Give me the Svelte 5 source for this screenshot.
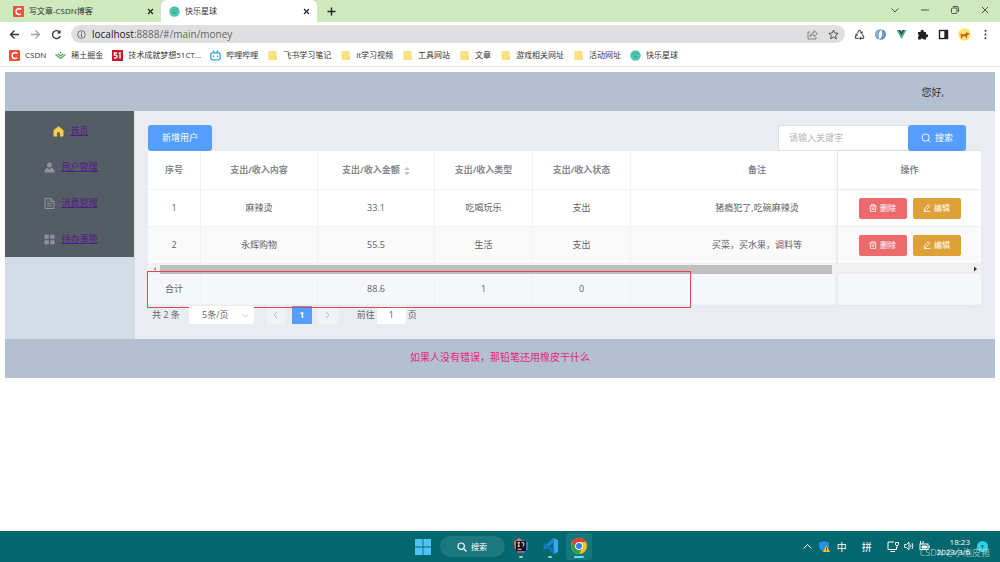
<script>
    let keyword = $state("");
    let current = $state("1");
    let pageSize = $state("5");

    const bookmarks = [
        { name: "CSDN", icon: "csdn" },
        { name: "稀土掘金", icon: "juejin" },
        { name: "技术成就梦想51CT...", icon: "cto" },
        { name: "哔哩哔哩", icon: "bili" },
        { name: "飞书学习笔记", icon: "folder" },
        { name: "it学习视频", icon: "folder" },
        { name: "工具网站", icon: "folder" },
        { name: "文章", icon: "folder" },
        { name: "游戏相关网址", icon: "folder" },
        { name: "活动网址", icon: "folder" },
        { name: "快乐星球", icon: "planet" },
    ];

    const menus = [
        { name: "首页", icon: "home" },
        { name: "用户管理", icon: "user" },
        { name: "消费管理", icon: "doc" },
        { name: "待办事项", icon: "grid" },
    ];

    const rows = [
        { id: 1, content: "麻辣烫", money: 33.1, type: "吃喝玩乐", status: "支出", remark: "猪瘾犯了,吃碗麻辣烫" },
        { id: 2, content: "永辉购物", money: 55.5, type: "生活", status: "支出", remark: "买菜，买水果，调料等" },
    ];

    const total = rows.reduce((sum, r) => sum + r.money, 0).toFixed(1);
</script>

{#snippet icon(name)}
    {#if name === "csdn"}
        <svg class="ico" viewBox="0 0 11 11"><rect width="11" height="11" rx="1" fill="#f0513a" /><path d="M8.3 3.4C6.5 2 3.1 2.5 3 5.6c0 3 3.2 3.5 5 2.3" fill="none" stroke="#fff" stroke-width="1.5" /></svg>
    {:else if name === "juejin"}
        <svg class="ico" viewBox="0 0 11 11" fill="none" stroke="#55a558" stroke-width="1.2"><path d="M.5 4.500l5 4 5-4M2.700 3.800l2.800 2.200 2.800-2.200" /><path d="M5.500 1.400l1.300 1.100-1.300 1-1.300-1z" fill="#55a558" stroke="none" /></svg>
    {:else if name === "cto"}
        <svg class="ico" viewBox="0 0 11 11"><rect width="11" height="11" fill="#c9182b" /><path d="M5 3H2.300v2.200h1.400c1.800 0 1.800 2.800 0 2.800H2M6.600 3.600L8 2.800v5.700" fill="none" stroke="#fff" stroke-width="1.3" /></svg>
    {:else if name === "bili"}
        <svg class="ico" viewBox="0 0 11 11" fill="none" stroke="#2ea4dc" stroke-width="1.3"><rect x=".8" y="2.8" width="9.4" height="7" rx="1.5" /><path d="M3 .6l1.500 2M8 .6l-1.500 2M3.500 5.500v1.500M7.500 5.500v1.500" /></svg>
    {:else if name === "folder"}
        <svg class="ico" viewBox="0 0 11 11"><path d="M2 1h7.500v9H2a.7.700 0 0 1-.7-.7V1.700A.7.700 0 0 1 2 1z" fill="#fbe180" /><path d="M8 6.500h1.500V10H8z" fill="#f5d35c" /></svg>
    {:else if name === "planet"}
        <svg class="ico" viewBox="0 0 11 11"><circle cx="5.5" cy="5.5" r="5.2" fill="#4fc5ae" /><path d="M3.500 3.800h1M6.500 3.200h1.200M3.800 6c1 1.500 2.800 1.300 3.500 0" fill="none" stroke="#25826f" stroke-width=".8" /></svg>
    {:else if name === "home"}
        <svg class="ico" viewBox="0 0 11 11"><path d="M5.500.5L.8 4.300v5.900h3V7.500a1.700 1.700 0 0 1 3.400 0v2.700h3V4.300z" fill="#ffd04b" stroke="#ffd04b" stroke-width=".5" stroke-linejoin="round" /></svg>
    {:else if name === "user"}
        <svg class="ico" viewBox="0 0 11 11" fill="#909399"><circle cx="5.5" cy="3" r="2.5" /><path d="M.5 10.500c0-3 1.500-4.500 3-4.800l2 1.800 2-1.800c1.500.3 3 1.800 3 4.800z" /></svg>
    {:else if name === "doc"}
        <svg class="ico" viewBox="0 0 11 11" fill="none" stroke="#909399"><path d="M1 .6h6L10 3.500v7H1zM6.800.6v3H10M3 3.500h2M3 5.700h5M3 8h5" /></svg>
    {:else if name === "grid"}
        <svg class="ico" viewBox="0 0 11 11" fill="#909399"><path d="M.5.800h4.300v4H.5zM6.200.800h4.300v4H6.200zM.5 6.200h4.300v4H.5zM6.200 6.200h4.300v4H6.200z" /></svg>
    {/if}
{/snippet}

<div class="screen">
    <header class="browser">
        <div class="tabs">
            <div class="tab first">
                {@render icon("csdn")}
                <span>写文章-CSDN博客</span>
                <button class="plain" aria-label="关闭"><svg width="7" height="7" viewBox="0 0 7 7"><path d="M1 1l5 5M6 1L1 6" stroke="#222" stroke-width="1.2" /></svg></button>
            </div>
            <div class="tab active">
                {@render icon("planet")}
                <span>快乐星球</span>
                <button class="plain" aria-label="关闭"><svg width="7" height="7" viewBox="0 0 7 7"><path d="M1 1l5 5M6 1L1 6" stroke="#222" stroke-width="1.2" /></svg></button>
            </div>
            <button class="plain new" aria-label="新标签页"><svg width="9" height="9" viewBox="0 0 9 9"><path d="M4.500.5v8M.5 4.500h8" stroke="#222" stroke-width="1.4" /></svg></button>
            <div class="window">
                <svg width="10" height="10" viewBox="0 0 10 10"><path d="M1.500 3.500L5 7l3.500-3.500" /></svg>
                <svg width="10" height="10" viewBox="0 0 10 10"><path d="M1 5h8" /></svg>
                <svg width="10" height="10" viewBox="0 0 10 10"><rect x="1.5" y="3" width="5.5" height="5.5" rx="1" /><path d="M3 1.500h4a1.500 1.500 0 0 1 1.500 1.500v4" /></svg>
                <svg width="10" height="10" viewBox="0 0 10 10"><path d="M2 2l6 6M8 2L2 8" /></svg>
            </div>
        </div>

        <div class="toolbar">
            <div class="nav">
                <svg width="11" height="11" viewBox="0 0 11 11" stroke="#333"><path d="M10 5.500H1.500M5.500 1.500l-4 4 4 4" /></svg>
                <svg width="11" height="11" viewBox="0 0 11 11" stroke="#a0a0a0"><path d="M1 5.500h8.500M5.500 1.500l4 4-4 4" /></svg>
                <svg width="11" height="11" viewBox="0 0 11 11" stroke="#333"><path d="M9.300 7A4 4 0 1 1 8.600 3" /><path d="M9.500.8v3.700H5.800z" fill="#333" stroke="none" /></svg>
            </div>
            <div class="address">
                <svg width="9" height="9" viewBox="0 0 9 9" fill="none" stroke="#555"><circle cx="4.5" cy="4.5" r="3.8" stroke-width=".8" /><path d="M4.500 4v2.700M4.500 2.300v1" /></svg>
                <span class="url"><b>localhost</b>:8888/#/main/money</span>
                <svg width="11" height="11" viewBox="0 0 11 11" fill="none" stroke="#777" stroke-width=".9"><path d="M3 3H1v7h8V8M3 7.500c.3-2.800 2-3.800 4-3.800V1.500l3.300 3.200L7 7.700V5.800C5.200 5.800 4 6.300 3 7.500z" /></svg>
                <svg width="11" height="11" viewBox="0 0 11 11" fill="none" stroke="#444" stroke-width=".9"><path d="M5.500 1l1.300 3 3.300.3-2.500 2.200.8 3.300-2.900-1.800-2.900 1.800.8-3.300L.9 4.300 4.200 4z" /></svg>
            </div>
            <div class="exts">
                <svg width="11" height="11" viewBox="0 0 11 11" fill="none" stroke="#555" stroke-width="1.2"><path d="M3.500 4l1.300-2.500h1.400L7.700 4M8.300 5.300L9.800 8l-.7 1.300H6M4.500 9.300H1.800L1.200 8l1.400-2.600M6.300 3.700l1.500.6.600-1.500M7 8L5.800 9.300 7 10.500M1.300 5.800L2.800 5l.8 1.400" /></svg>
                <svg width="11" height="11" viewBox="0 0 11 11" fill="none" stroke="#7ba3d0" stroke-width="1.6"><path d="M5 1C2 1 .8 3.500.8 5.500S2 9.500 3.500 9.500C2.300 7 3 3 5 1z" fill="#a9c4e2" /><path d="M6 10c3 0 4.200-2.500 4.200-4.500S9 1.500 7.500 1.500C8.700 4 8 8 6 10z" fill="#a9c4e2" stroke="#5f8cc4" /></svg>
                <svg width="11" height="11" viewBox="0 0 11 11"><path d="M.5 1h3l2 3.500L7.500 1h3l-5 9z" fill="#41b883" /><path d="M2.500 1h2l1 1.800L6.500 1h2l-3 5.500z" fill="#34495e" /></svg>
                <svg width="11" height="11" viewBox="0 0 11 11" fill="#222"><path d="M1 3h2.700a1.600 1.600 0 1 1 3 0H9v2.400a1.500 1.500 0 1 1 0 2.800v2.300H6.500a1.500 1.500 0 0 0-2.800 0H1V7.900a1.500 1.500 0 0 0 0-2.600z" /></svg>
                <svg width="11" height="11" viewBox="0 0 11 11"><rect x="1.5" y="1.5" width="8" height="8" fill="none" stroke="#222" stroke-width="1.4" /><path d="M6.300 1h3.500v9H6.300z" fill="#222" /></svg>
                <svg class="avatar" width="13" height="13" viewBox="0 0 14 14"><circle cx="7" cy="7" r="6.7" fill="#fbe56d" /><path d="M2 6l2 .6h4l1-2.400 1 1 2 .4-.6 1.600-1.600.6L9.500 11h-1l-.3-2H5.500L4 11H3l.3-3z" fill="#c65a24" /></svg>
                <svg width="11" height="11" viewBox="0 0 11 11" fill="#333"><circle cx="5.5" cy="1.8" r="1" /><circle cx="5.5" cy="5.5" r="1" /><circle cx="5.5" cy="9.2" r="1" /></svg>
            </div>
        </div>

        <nav class="bookmarks">
            {#each bookmarks as b}
                <a href="#/">{@render icon(b.icon)}{b.name}</a>
            {/each}
        </nav>
    </header>

    <div class="page">
        <div class="top">您好,</div>

        <div class="middle">
            <aside>
                <ul>
                    {#each menus as m}
                        <li>{@render icon(m.icon)}<a href="#/main">{m.name}</a></li>
                    {/each}
                </ul>
            </aside>

            <main>
                <div class="actions">
                    <button class="primary add">新增用户</button>
                    <div class="search">
                        <input type="text" aria-label="关键字" placeholder="请输入关键字" bind:value={keyword}>
                        <button class="primary">
                            <svg width="10" height="10" viewBox="0 0 10 10" fill="none" stroke="#fff" stroke-width=".9"><circle cx="4.6" cy="4.6" r="3.6" /><path d="M7.200 7.200L9.300 9.300" /></svg>
                            搜索
                        </button>
                    </div>
                </div>

                <div class="tablebox">
                    <table>
                        <colgroup>
                            <col class="c-id"><col class="c-wide"><col class="c-wide"><col class="c-mid"><col class="c-mid"><col><col class="c-op">
                        </colgroup>
                        <thead>
                            <tr>
                                <th>序号</th>
                                <th>支出/收入内容</th>
                                <th>支出/收入金额 <svg class="sort" width="6" height="10" viewBox="0 0 6 10" fill="#c0c4cc"><path d="M3 1l3 3H0zM3 9L0 6h6z" /></svg></th>
                                <th>支出/收入类型</th>
                                <th>支出/收入状态</th>
                                <th class="remark">备注</th>
                                <th class="fixed">操作</th>
                            </tr>
                        </thead>
                        <tbody>
                            {#each rows as row}
                                <tr>
                                    <td>{row.id}</td>
                                    <td>{row.content}</td>
                                    <td>{row.money}</td>
                                    <td>{row.type}</td>
                                    <td>{row.status}</td>
                                    <td class="remark">{row.remark}</td>
                                    <td class="fixed">
                                        <div class="ops">
                                            <button class="danger">
                                                <svg width="8" height="8" viewBox="0 0 8 8" fill="none" stroke="#fff" stroke-width=".8"><path d="M.5 2h7M2.500 2V.7h3V2M1.300 2v5.400h5.400V2M3.200 3.500V6M4.800 3.500V6" /></svg>
                                                删除
                                            </button>
                                            <button class="warning">
                                                <svg width="8" height="8" viewBox="0 0 8 8" fill="none" stroke="#fff" stroke-width=".8"><path d="M5.300.8l1.500 1.500L3 6.200l-1.800.3.300-1.800zM.7 7.500h6.600" /></svg>
                                                编辑
                                            </button>
                                        </div>
                                    </td>
                                </tr>
                            {/each}
                        </tbody>
                        <tfoot>
                            <tr class="scroll">
                                <td colspan="7">
                                    <div class="bar">
                                        <svg width="5" height="6" viewBox="0 0 5 6"><path d="M4 1v4L1.500 3z" fill="#999" /></svg>
                                        <div class="track"><div class="thumb"></div></div>
                                        <svg width="5" height="6" viewBox="0 0 5 6"><path d="M1 .5v5L4 3z" fill="#333" /></svg>
                                    </div>
                                </td>
                            </tr>
                            <tr class="sum">
                                <td>合计</td>
                                <td></td>
                                <td>{total}</td>
                                <td>1</td>
                                <td>0</td>
                                <td></td>
                                <td class="fixed"></td>
                            </tr>
                        </tfoot>
                    </table>
                    <div class="mark"></div>
                </div>

                <div class="pagination">
                    <span>共 {rows.length} 条</span>
                    <div class="size">
                        <select aria-label="每页条数" bind:value={pageSize}>
                            <option value="5">5条/页</option>
                            <option value="10">10条/页</option>
                        </select>
                        <svg width="7" height="5" viewBox="0 0 7 5"><path d="M.5 1l3 3 3-3" fill="none" stroke="#c0c4cc" /></svg>
                    </div>
                    <div class="pager">
                        <button aria-label="上一页"><svg width="5" height="8" viewBox="0 0 5 8"><path d="M4 1L1 4l3 3" fill="none" stroke="#b4b8c0" /></svg></button>
                        <button class="on">1</button>
                        <button aria-label="下一页"><svg width="5" height="8" viewBox="0 0 5 8"><path d="M1 1l3 3-3 3" fill="none" stroke="#b4b8c0" /></svg></button>
                    </div>
                    <label>前往 <input type="text" bind:value={current}> 页</label>
                </div>
            </main>
        </div>

        <footer>如果人没有错误，那铅笔还用橡皮干什么</footer>
    </div>

    <div class="taskbar">
        <div class="apps">
            <svg width="16" height="16" viewBox="0 0 16 16" fill="#4cc2f5"><path d="M0 0h7.600v7.600H0zM8.400 0H16v7.600H8.400zM0 8.400h7.600V16H0zM8.400 8.400H16V16H8.400z" /></svg>
            <button class="find">
                <svg width="10" height="10" viewBox="0 0 10 10" fill="none" stroke="#fff" stroke-width="1.2"><circle cx="4.2" cy="4.2" r="3.2" /><path d="M6.600 6.600L9.500 9.500" /></svg>
                搜索
            </button>
            <div class="app">
                <svg width="16" height="16" viewBox="0 0 16 16"><path d="M1 4l5-4 4 3-3 6-5 2z" fill="#f97a3c" /><path d="M8 1l7 3v7l-5 5-4-4z" fill="#2f7de1" /><path d="M1 9l5-3 5 8-6 1z" fill="#e8457c" /><rect x="3" y="3" width="10" height="10" fill="#111" /><path d="M4.500 4.700h2.500M5.750 4.700v3.500M4.500 8.200H7M8.500 4.700h2.300v2.700q0 1-1.200.8M4.500 11.300h4" fill="none" stroke="#fff" stroke-width=".9" /></svg>
                <i></i>
            </div>
            <div class="app">
                <svg width="16" height="16" viewBox="0 0 16 16"><path d="M11.500 0v16L16 14V2z" fill="#3ba5ee" /><path d="M11.500 0L1 9.500l1.800 1.700L12.500 4z" fill="#1f86d6" /><path d="M11.500 16L1 6.500l1.800-1.700L12.500 12z" fill="#1274bf" /></svg>
                <i></i>
            </div>
            <div class="app current">
                <svg width="16" height="16" viewBox="0 0 16 16"><circle cx="8" cy="8" r="8" fill="#fbc116" /><path d="M1.100 4A8 8 0 0 1 14.900 4H8L4.500 10z" fill="#e33b2e" /><path d="M1.100 4A8 8 0 0 0 8 16l3.500-6L8 12 4.500 10z" fill="#2ba24c" /><circle cx="8" cy="8" r="3.9" fill="#fff" /><circle cx="8" cy="8" r="3" fill="#3b7de8" /></svg>
                <i></i>
            </div>
        </div>

        <div class="tray">
            <svg width="9" height="9" viewBox="0 0 9 9" fill="none" stroke="#fff"><path d="M.7 6.500l3.800-4 3.800 4" /></svg>
            <svg width="11" height="11" viewBox="0 0 11 11"><path d="M5 0l5 1.500V5c0 3-2.500 5-5 6-2.500-1-5-3-5-6V1.500z" fill="#2d8de0" /><path d="M7.500 4.500L11 11H4z" fill="#fbc02d" /><path d="M7.500 6.500v2M7.500 9.200v.9" stroke="#222" stroke-width=".8" /></svg>
            <span class="ime">中</span>
            <span class="ime">拼</span>
            <div class="sys">
                <svg width="12" height="11" viewBox="0 0 12 11" fill="none" stroke="#fff"><path d="M7 1H1v7.500h8.500V6M3.500 10.500H8M8.500 1.500h3v2.300l-1.500 1-1.500-1zM10 5v2" /></svg>
                <svg width="10" height="10" viewBox="0 0 10 10" fill="none" stroke="#fff" stroke-width=".9"><path d="M.6 3.500h1.800L5 1.200v7.600L2.400 6.500H.6zM6.500 3.500q1 1.500 0 3M8 2q2 3 0 6" /></svg>
                <svg width="11" height="10" viewBox="0 0 11 10" fill="none" stroke="#fff"><rect x="1" y="3" width="8" height="5.5" /><path d="M10.300 4.500v2.500M3 5h4.500v2H3z" fill="#fff" /><path d="M1.500 0v3M4 0v3" /></svg>
            </div>
            <div class="clock">
                <span>18:23</span>
                <span>2023/3/6</span>
            </div>
            <span class="badge">1</span>
            <span class="watermark">CSDN @小泡皮猪</span>
        </div>
    </div>
</div>

<style>
    :global(body) {
        margin: 0;
        background: #fff;
    }

    .screen {
        min-height: 100vh;
        display: flex;
        flex-direction: column;
        font-family: "Open Sans", "Noto Sans CJK SC", sans-serif;
        font-size: 9px;
        line-height: 12px;
        color: #606266;
    }

    .screen * {
        box-sizing: border-box;
    }

    svg {
        flex: none;
        display: block;
    }

    button,
    input,
    select {
        font: inherit;
        margin: 0;
        padding: 0;
        border: 0;
    }

    .ico {
        width: 11px;
        height: 11px;
    }

    .plain {
        background: none;
    }

    /* browser */
    .browser {
        border-bottom: 1px solid #e3e5e8;
        color: #333;
        font-size: 8px;
    }

    .tabs {
        display: flex;
        height: 22px;
        background: #cde9bd;
    }

    .tab {
        display: flex;
        align-items: center;
        gap: 5px;
        padding: 0 7px 0 8px;
        width: 156px;
    }

    .tab.first {
        width: 161px;
        padding-left: 13px;
    }

    .tab span {
        flex: 1;
        white-space: nowrap;
    }

    .tab.active {
        background: #fff;
        border-radius: 6px 6px 0 0;
    }

    .new {
        margin-left: 10px;
    }

    .window {
        display: flex;
        align-items: center;
        gap: 20px;
        margin-left: auto;
        padding: 0 10px 2px 0;
        fill: none;
        stroke: #444;
        stroke-width: 0.9;
    }

    .toolbar {
        display: flex;
        align-items: center;
        height: 24px;
        padding: 0 9px;
    }

    .nav {
        display: flex;
        gap: 10px;
        width: 62px;
        fill: none;
        stroke-width: 1.3;
    }

    .address {
        flex: 1;
        display: flex;
        align-items: center;
        gap: 6px;
        height: 18px;
        padding: 0 6px;
        border-radius: 9px;
        background: #dfdfe2;
    }

    .address svg:last-child {
        margin-left: 4px;
    }

    .url {
        flex: 1;
        font-size: 10px;
        color: #666;
    }

    .url b {
        font-weight: normal;
        color: #222;
    }

    .exts {
        display: flex;
        align-items: center;
        gap: 10px;
        padding-left: 9px;
    }

    .avatar {
        margin: 0 -1px;
    }

    .bookmarks {
        display: flex;
        align-items: center;
        gap: 9px;
        height: 20px;
        padding: 0 9px 2px;
    }

    .bookmarks a {
        display: flex;
        align-items: center;
        gap: 5px;
        color: #333;
        text-decoration: none;
        white-space: nowrap;
    }

    /* page */
    .page {
        flex: 1;
        padding: 5px;
    }

    .top {
        height: 39px;
        padding-right: 51px;
        line-height: 40px;
        font-size: 10px;
        text-align: right;
        color: #333;
        background: #b3c0d1;
    }

    .middle {
        display: flex;
    }

    aside {
        width: 130px;
        background: #d3dce6;
    }

    ul {
        margin: 0;
        padding: 2px 0 0;
        list-style: none;
        background: #545c64;
        border-right: 1px solid #e6e6e6;
    }

    li {
        display: flex;
        align-items: center;
        justify-content: center;
        gap: 6px;
        height: 36px;
        padding-left: 3px;
    }

    li a {
        color: #551a8b;
    }

    main {
        flex: 1;
        padding: 14px 14px 15px 13px;
        background: #e9edf2;
    }

    .actions {
        display: flex;
        justify-content: space-between;
        padding-right: 15px;
    }

    .primary {
        display: flex;
        align-items: center;
        justify-content: center;
        gap: 4px;
        height: 26px;
        width: 58px;
        color: #fff;
        background: #559dff;
        border-radius: 3px;
    }

    .add {
        width: 64px;
    }

    .search {
        display: flex;
    }

    .search input {
        width: 130px;
        padding: 0 10px;
        background: #fff;
        border: 1px solid #dcdfe6;
        border-right: 0;
        border-radius: 3px 0 0 3px;
    }

    .search input::placeholder {
        color: #b4b8c0;
    }

    .tablebox {
        position: relative;
    }

    table {
        width: 100%;
        table-layout: fixed;
        border-collapse: separate;
        border-spacing: 0;
        background: #fff;
        text-align: center;
    }

    .c-id {
        width: 53px;
    }

    .c-wide {
        width: 117px;
    }

    .c-mid {
        width: 98px;
    }

    .c-op {
        width: 143px;
    }

    th,
    td {
        padding: 0;
        border-right: 1px solid #f0f2f6;
        border-bottom: 1px solid #f0f2f6;
    }

    th {
        height: 39px;
        color: #85888e;
    }

    td {
        height: 37px;
    }

    .sort {
        display: inline-block;
        margin-left: 2px;
        vertical-align: middle;
    }

    .remark {
        padding-left: 46px;
    }

    .fixed {
        border-right: 0;
        box-shadow: -2px 0 4px rgba(0, 0, 0, 0.06);
    }

    tbody tr:nth-child(2) td {
        background: #fafafa;
    }

    .ops {
        display: flex;
        justify-content: center;
        gap: 6px;
    }

    .ops button {
        display: flex;
        align-items: center;
        justify-content: center;
        gap: 3px;
        width: 48px;
        height: 21px;
        font-size: 8px;
        color: #fff;
        border-radius: 2px;
    }

    .ops .danger {
        background: #ed6a6c;
    }

    .ops .warning {
        background: #dfa137;
    }

    .scroll td {
        height: 10px;
        border: 0;
    }

    .bar {
        display: flex;
        align-items: center;
        gap: 3px;
        height: 10px;
        padding: 0 3px 0 4px;
        background: #f1f1f1;
    }

    .track {
        flex: 1;
        height: 9px;
    }

    .thumb {
        width: 83%;
        height: 9px;
        background: #bfbfbf;
    }

    .sum td {
        height: 31px;
        background: #f5f7fa;
    }

    /* frame around the summary row */
    .mark {
        position: absolute;
        left: -1px;
        bottom: -3px;
        width: 544px;
        height: 37px;
        border: 1px solid #e2474f;
    }

    .pagination {
        display: flex;
        align-items: center;
        height: 19px;
        padding-left: 4px;
    }

    .size {
        position: relative;
        margin: 0 12px 0 9px;
    }

    .size select {
        appearance: none;
        display: block;
        width: 65px;
        height: 18px;
        padding-right: 12px;
        text-align: center;
        text-align-last: center;
        color: #606266;
        background: #fff;
        border-radius: 2px;
    }

    .size svg {
        position: absolute;
        right: 5px;
        top: 7px;
    }

    .pager {
        display: flex;
        gap: 6px;
        margin-right: 19px;
    }

    .pager button {
        display: flex;
        align-items: center;
        justify-content: center;
        width: 20px;
        height: 18px;
        background: #f0f2f5;
        border-radius: 1px;
    }

    .pager .on {
        color: #fff;
        font-weight: bold;
        background: #559dff;
    }

    .pagination label {
        display: flex;
        align-items: center;
        gap: 2px;
    }

    .pagination input {
        width: 29px;
        height: 18px;
        text-align: center;
        color: #606266;
        background: #fff;
        border-radius: 2px;
    }

    footer {
        height: 39px;
        line-height: 36px;
        font-size: 10px;
        text-align: center;
        color: #e91e86;
        background: #b3c0d1;
    }

    /* taskbar */
    .taskbar {
        position: relative;
        display: flex;
        justify-content: center;
        height: 31px;
        background: #03676e;
        color: #fff;
    }

    .apps {
        display: flex;
        align-items: center;
        gap: 3px;
        padding-left: 6px;
    }

    .find {
        display: flex;
        align-items: center;
        justify-content: center;
        gap: 4px;
        width: 65px;
        height: 21px;
        margin-left: 6px;
        font-size: 8px;
        color: #fff;
        background: #1c777e;
        border-radius: 11px;
    }

    .app {
        display: flex;
        flex-direction: column;
        align-items: center;
        justify-content: center;
        gap: 2px;
        width: 26px;
        height: 27px;
        padding-top: 3px;
    }

    .app.current {
        background: #17777d;
        border-radius: 3px;
    }

    .app i {
        width: 4px;
        height: 2px;
        border-radius: 1px;
        background: #a9c6c8;
    }

    .app.current i {
        width: 10px;
        background: #5fe0ec;
    }

    .tray {
        position: absolute;
        right: 12px;
        top: 0;
        height: 31px;
        display: flex;
        align-items: center;
        gap: 7px;
    }

    .ime {
        font-size: 10px;
        margin-right: 8px;
    }

    .sys {
        display: flex;
        gap: 5px;
    }

    .clock {
        display: flex;
        flex-direction: column;
        align-items: flex-end;
        font-size: 8px;
        line-height: 10px;
    }

    .badge {
        width: 11px;
        height: 11px;
        border-radius: 50%;
        background: #2fd0e6;
        color: #024;
        font-size: 8px;
        line-height: 11px;
        text-align: center;
    }

    .watermark {
        position: absolute;
        right: -2px;
        bottom: 3px;
        font-size: 9px;
        white-space: nowrap;
        color: rgba(255, 255, 255, 0.55);
    }
</style>
